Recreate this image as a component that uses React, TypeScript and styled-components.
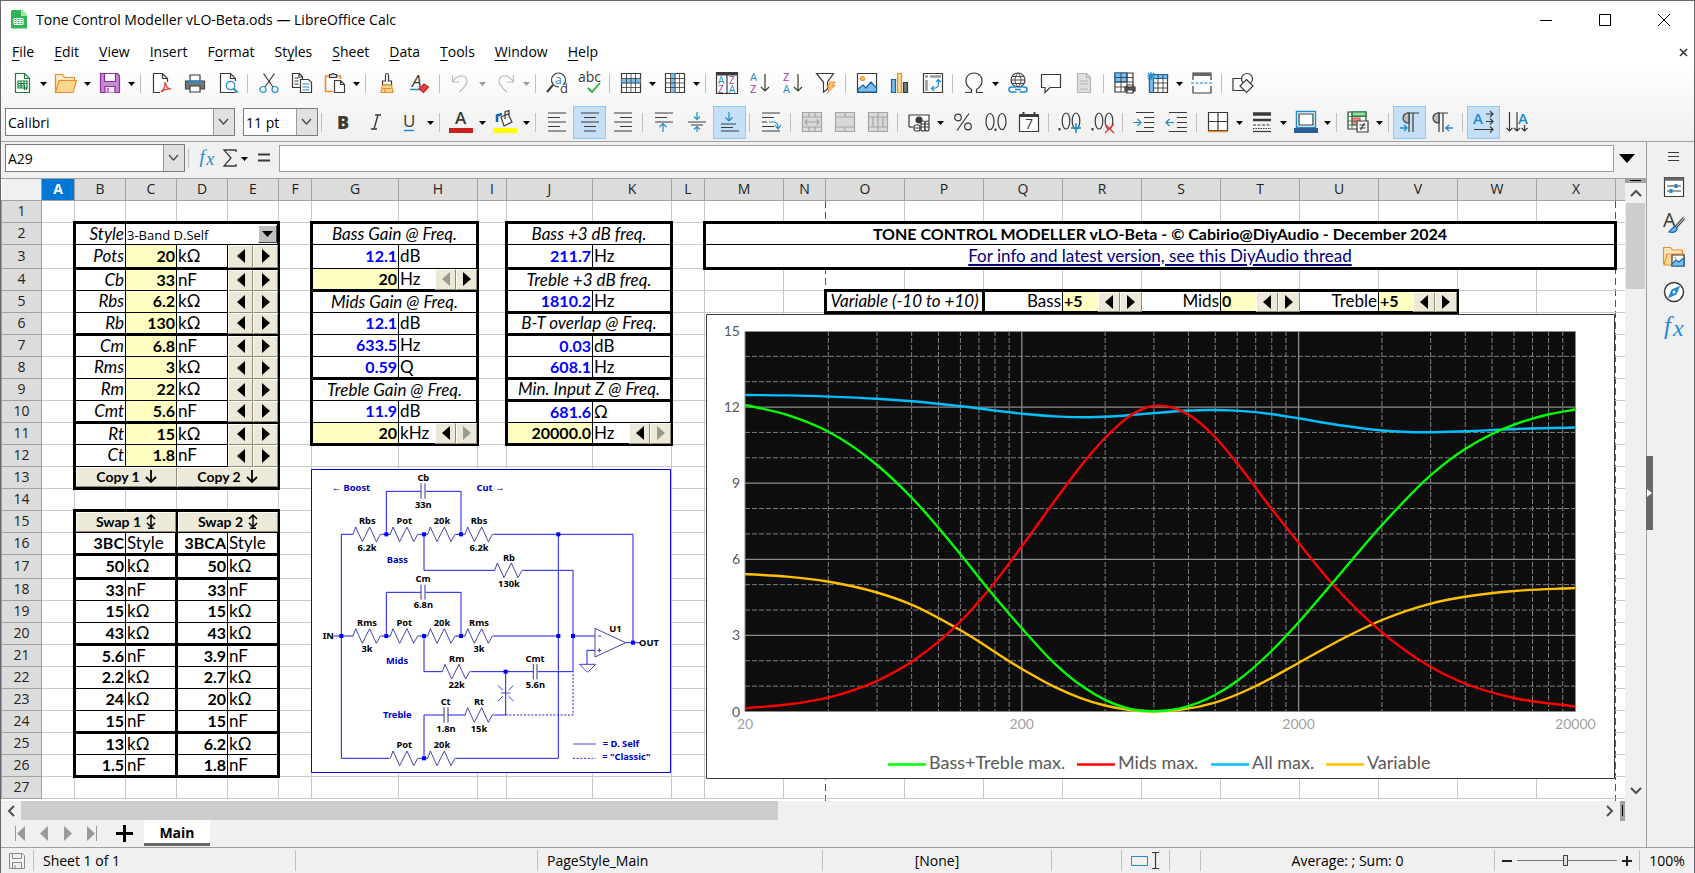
import React, { ReactNode } from "react";
import styled, { createGlobalStyle, css } from "styled-components";

const UI = `"Open Sans", "Noto Sans", sans-serif`;
const CELL = `Lato, "Open Sans", sans-serif`;
const INK = "#3a3a38";
const BLUE = "#1e8bcd";
const LINE = "#a0a0a0";

const Global = createGlobalStyle`
  *, *::before, *::after { box-sizing: border-box; }
  body { margin: 0; background: #f0f0f0; font-family: ${UI}; font-size: 14px; color: #000; }
  button, select, input { font: inherit; color: inherit; border-radius: 0; margin: 0; }
  button { padding: 0; border: 0; background: none; }
  svg { overflow: visible; }
`;

/* ---------- window frame ---------- */

const Frame = styled.div`
  min-height: 100vh;
  display: flex;
  flex-direction: column;
  border: 1px solid #68666c;
  background: #f0f0f0;
  overflow: hidden;
`;

const Top = styled.header`
  background: linear-gradient(#fff 0, #fff 60px, #f0f0f0 100%);
  border-bottom: 1px solid ${LINE};
`;

const TitleBar = styled.div`
  height: 37px;
  display: flex;
  align-items: center;
  padding: 0 1px 0 8px;
`;

const Title = styled.h1`
  margin: 0 0 0 6px;
  flex: 1;
  font-size: 14px;
  font-weight: 400;
  line-height: 20px;
`;

const WindowButton = styled.button`
  width: 59px;
  height: 36px;
  display: grid;
  place-items: center;
`;

const MenuBar = styled.nav`
  height: 28px;
  display: flex;
  align-items: center;
  padding: 0 5px 0 11px;
`;

const MenuItem = styled.button`
  font-size: 14px;
  line-height: 20px;
  margin-right: 20px;
  u { text-underline-offset: 3px; }
`;

const CloseDoc = styled.button`
  margin-left: auto;
  display: grid;
`;

const ToolRow = styled.div<{ $h: number; $pad?: number }>`
  height: ${(p) => p.$h}px;
  display: flex;
  align-items: center;
  padding: ${(p) => p.$pad ?? 0}px 0 0 4px;
`;

const Tool = styled.button<{ $on?: boolean }>`
  flex: none;
  width: 33px;
  height: 33px;
  display: grid;
  place-items: center;
  border: 1px solid ${(p) => (p.$on ? "#90c8f6" : "transparent")};
  background: ${(p) => (p.$on ? "#c5e0f6" : "none")};
`;

const DropArrow = styled.button<{ $dim?: boolean }>`
  flex: none;
  width: 11px;
  height: 33px;
  display: grid;
  place-items: center;
  padding-top: 2px;
  color: ${(p) => (p.$dim ? "#9a9a9a" : "#000")};
`;

const Sep = styled.span`
  flex: none;
  width: 1px;
  height: 19px;
  margin: 0 4px 0 3px;
  background: #c0c0c0;
`;

const Combo = styled.label<{ $w: number; $gap?: number }>`
  position: relative;
  flex: none;
  width: ${(p) => p.$w}px;
  height: 28px;
  margin-right: ${(p) => p.$gap ?? 0}px;
  display: block;
  svg { position: absolute; right: 1px; top: 1px; pointer-events: none; }
  select {
    appearance: none;
    width: 100%;
    height: 100%;
    border: 1px solid #7a7a7a;
    background: #fff;
    padding: 0 22px 0 2px;
    font-size: 14px;
  }
`;

/* ---------- body ---------- */

const Body = styled.div`
  flex: 1;
  display: flex;
  min-height: 0;
`;

const Main = styled.main`
  flex: 1;
  min-width: 0;
  display: flex;
  flex-direction: column;
`;

const FormulaBar = styled.div`
  height: 36px;
  display: flex;
  align-items: center;
  padding: 0 9px 4px 4px;
`;

const FormulaTool = styled.button<{ $w: number }>`
  flex: none;
  width: ${(p) => p.$w}px;
  height: 28px;
  display: grid;
  place-items: center;
`;

const FormulaInput = styled.input`
  flex: 1;
  min-width: 0;
  height: 27px;
  margin: 0 3px 0 1px;
  border: 1px solid ${LINE};
  background: #fff;
`;

const SheetArea = styled.div`
  flex: 1;
  display: flex;
  min-height: 0;
`;

const SheetView = styled.section`
  position: relative;
  flex: 1;
  min-width: 0;
  min-height: 623px;
  overflow: hidden;
  background: #fff;
  border-top: 1px solid ${LINE};
`;

const VBar = styled.div`
  flex: none;
  width: 21px;
  display: flex;
  flex-direction: column;
  align-items: center;
  background: #f0f0f0;
`;

const VSplit = styled.div`
  width: 100%;
  height: 5px;
  display: grid;
  place-items: center;
  background: ${LINE};
  &::after { content: ""; width: 11px; height: 1px; background: #000; }
`;

const VThumb = styled.div`
  width: 19px;
  height: 86px;
  background: #cdcdcd;
  margin-bottom: auto;
`;

const ScrollButton = styled.button`
  flex: none;
  width: 20px;
  height: 20px;
  display: grid;
  place-items: center;
`;

const HBar = styled.div`
  height: 19px;
  display: flex;
  align-items: center;
  margin-right: 21px;
`;

const HThumb = styled.div`
  width: 46.6%;
  height: 19px;
  background: #cdcdcd;
  margin-right: auto;
`;

const HSplit = styled.div`
  width: 5px;
  height: 20px;
  display: grid;
  place-items: center;
  background: ${LINE};
  &::after { content: ""; width: 1px; height: 11px; background: #000; }
`;

const Tabs = styled.div`
  height: 27px;
  display: flex;
  padding-left: 7px;
`;

const TabNav = styled.button<{ $w?: number }>`
  width: ${(p) => p.$w ?? 24}px;
  height: 26px;
  padding-top: 1px;
  display: grid;
  place-items: center;
`;

const SheetTab = styled.button`
  width: 66px;
  height: 26px;
  padding-top: 3px;
  background: #fff;
  border-bottom: 3px solid #696969;
  font-weight: 700;
  font-size: 14px;
  line-height: 20px;
`;

const Sidebar = styled.aside`
  position: relative;
  flex: none;
  width: 48px;
  border-left: 1px solid ${LINE};
  padding: 1px 0 0 9px;
  display: flex;
  flex-direction: column;
`;

const SideTool = styled.button<{ $h?: number }>`
  width: 35px;
  height: ${(p) => p.$h ?? 35}px;
  display: grid;
  place-items: center;
`;

const SideHandle = styled.button`
  position: absolute;
  left: -1px;
  top: 314px;
  width: 7px;
  height: 74px;
  background: #696969;
  display: grid;
  place-items: center;
`;

/* ---------- status bar ---------- */

const Status = styled.footer`
  height: 26px;
  display: grid;
  grid-template-columns: 32px 262fr 242fr 285fr 229fr 70fr 47fr 31fr 294fr 145px 55px;
  align-items: center;
  border-top: 1px solid ${LINE};
`;

const StatusCell = styled.div<{ $align?: string }>`
  height: 21px;
  display: flex;
  align-items: center;
  justify-content: ${(p) => p.$align ?? "center"};
  gap: 5px;
  padding: 0 9px;
  font-size: 14px;
  line-height: 20px;
  white-space: nowrap;
  & + & { border-left: 1px solid #c0c0c0; }
`;

const ZoomRange = styled.input`
  appearance: none;
  flex: none;
  width: 100px;
  height: 12px;
  background: linear-gradient(#777, #777) center / 100% 1px no-repeat;
  &::-webkit-slider-thumb {
    appearance: none;
    width: 5px;
    height: 11px;
    border: 1px solid #444;
    background: #ddd;
  }
`;

/* ---------- sheet ---------- */

type Edge = "grid" | "thin" | "thick" | "head" | "none";
const edgeCss: Record<Edge, string> = {
  grid: "1px solid #c8c8c8",
  thin: "1px solid #000",
  thick: "3px solid #000",
  head: "1px solid #a0a0a0",
  none: "0 none",
};

const Grid = styled.table`
  position: relative;
  border-collapse: collapse;
  table-layout: fixed;
  width: 0;
  font-family: ${CELL};
  font-size: 17px;
  line-height: 18px;
`;

const Col = styled.col<{ $w: number }>`
  width: ${(p) => p.$w}px;
`;

const Row = styled.tr<{ $h: number }>`
  height: ${(p) => p.$h}px;
`;

const Head = styled.th<{ $on?: boolean; $corner?: boolean }>`
  padding: 0;
  font-family: ${UI};
  font-size: 14px;
  font-weight: ${(p) => (p.$on ? 700 : 400)};
  color: ${(p) => (p.$on ? "#fff" : "#222")};
  background: ${(p) => (p.$on ? "#0078d7" : p.$corner ? "#f0f0f0" : "#dcdcdc")};
  border: ${edgeCss.head};
  border-top: 0;
  ${(p) => p.$corner && css`border-left: 0;`}
`;

const Cell = styled.td<{ $e: Edge[]; $fill?: boolean; $wide?: boolean; $align?: string; $k?: string }>`
  position: relative;
  padding: 0 1px;
  white-space: nowrap;
  border-top: ${(p) => edgeCss[p.$e[0]]};
  border-right: ${(p) => edgeCss[p.$e[1]]};
  border-bottom: ${(p) => edgeCss[p.$e[2]]};
  border-left: ${(p) => edgeCss[p.$e[3]]};
  background: ${(p) => (p.$fill ? "#ffffc4" : p.$wide ? "#fff" : "transparent")};
  text-align: ${(p) => p.$align ?? "left"};
  ${(p) => p.$k === "label" && css`font-style: italic;`}
  ${(p) => (p.$k === "value" || p.$k === "result") && css`font-weight: 700; font-size: 16px;`}
  ${(p) => p.$k === "result" && css`color: #0000ff;`}
`;

/* dashed line at the edge of a printed page */
const PageBreak = styled.div<{ $x: number }>`
  position: absolute;
  left: ${(p) => p.$x}px;
  top: 22px;
  bottom: 0;
  width: 1px;
  background: repeating-linear-gradient(#555 0 7px, #fff 7px 11px);
`;

const SheetLink = styled.a`
  color: #000080;
  text-underline-offset: 2px;
  text-decoration-thickness: 2px;
`;

const SpinBox = styled.div<{ $w: number }>`
  position: absolute;
  z-index: 1;
  right: -1px;
  top: 0;
  bottom: -1px;
  width: ${(p) => p.$w}px;
  display: flex;
`;

const face = css`
  background: #ece9d8;
  border: 1px solid;
  border-color: #fffef6 #8f8b78 #8f8b78 #fffef6;
`;

const SpinButton = styled.button`
  ${face}
  flex: 1;
  display: grid;
  place-items: center;
  color: #000;
  &:disabled { color: #9d9a8c; }
`;

const SheetButton = styled.button`
  ${face}
  position: absolute;
  z-index: 1;
  inset: 0 -1px 0 0;
  display: flex;
  align-items: center;
  justify-content: center;
  gap: 5px;
  font-size: 14px;
  font-weight: 700;
`;

const StyleSelect = styled.label`
  position: absolute;
  inset: 0;
  select {
    appearance: none;
    width: 100%;
    height: 100%;
    border: 0;
    background: #fff;
    padding: 2px 0 0 1px;
    font-family: ${UI};
    font-size: 13px;
    line-height: 16px;
  }
  svg { position: absolute; right: 0; top: 1px; background: #c0c0c0; border: 1px solid; border-color: #fff #444 #444 #fff; pointer-events: none; }
`;

const Floating = styled.figure<{ $x: number; $y: number }>`
  position: absolute;
  z-index: 2;
  left: ${(p) => p.$x}px;
  top: ${(p) => p.$y}px;
  margin: 0;
  svg { display: block; }
`;

/* ---------- icons ---------- */

const Ico = ({ children, s = 20, vb = 20 }: { children: ReactNode; s?: number; vb?: number }) => (
  <svg width={s} height={s} viewBox={`0 0 ${vb} ${vb}`} fill="none" stroke={INK} strokeWidth="1.2" aria-hidden="true">
    {children}
  </svg>
);
const glyph = (t: string, x: number, y: number, size: number, fill = INK, weight = 400, extra: object = {}) => (
  <text x={x} y={y} fontSize={size} fill={fill} stroke="none" fontWeight={weight} fontFamily="Open Sans, sans-serif" {...extra}>{t}</text>
);
const Caret = () => (
  <svg width="7" height="4" viewBox="0 0 7 4" aria-hidden="true"><path d="M0 0h7L3.500 4z" fill="currentColor" /></svg>
);
const ComboArrow = () => (
  <svg width="21" height="26" viewBox="0 0 21 26" aria-hidden="true">
    <path d="M0 0h21v26H0z" fill="#e1e1e1" /><path d="M.5 0v26" stroke="#9a9a9a" /><path d="M6 10l4.500 5 4.500-5" fill="none" stroke="#444" strokeWidth="1.200" />
  </svg>
);
const Tri = ({ left }: { left?: boolean }) => (
  <svg width="8" height="14" viewBox="0 0 8 14" aria-hidden="true"><path d={left ? "M8 0v14L0 7z" : "M0 0v14l8-7z"} fill="currentColor" /></svg>
);
const gridLines = "M.5 5.500h19M.5 10h19M.5 14.500h19M5.500.5v19M10 .5v19M14.500.5v19";

const icons: Record<string, ReactNode> = {
  new: <Ico><path d="M3.500.5h9l5 5v14h-14z" fill="#fff" stroke="#18803a" /><path d="M12.500.5v5h5" stroke="#18803a" /><path d="M6 8h9v7H6zM6 10.500h9M6 13h6M9 8v7M12 8v4" stroke="#18803a" /><path d="M12.500 12v5M14.500 14v3" stroke="#18803a" /></Ico>,
  open: <Ico s={23} vb={23}><path d="M1.500 20V2.500h7l2 3h10V9" fill="#fde8c0" stroke="#ef8b2c" /><path d="M1.500 20.500L5 8.500h17.500L19 20.500z" fill="#fbd88f" stroke="#ef8b2c" /></Ico>,
  save: <Ico><path d="M.5.5h17l2 2v17H.5z" fill="#c58ad0" stroke="#8e2f9e" /><path d="M4.500.5h11v8h-11z" fill="#fff" stroke="#8e2f9e" /><path d="M5 19.500v-6h10v6M8 15v4" fill="#f3e4f6" stroke="#8e2f9e" /></Ico>,
  pdf: <Ico><path d="M8 19.500H1.500V.5h9l5 5V9M10.500.5v5h5" fill="#fff" /><path d="M9 19c3-3 4.500-6 4-8.500-.5-1.500 1-1 .8.800 0 2.500 2.700 4.700 5.200 4.700-3-.5-7 .5-10 3" stroke="#e04646" strokeWidth="1.400" /></Ico>,
  print: <Ico><path d="M5 8V2h10v6" fill="#fff" /><path d="M.5 8h19v8H.5z" fill="#777" stroke="#4a4a48" /><path d="M3 8.500h14" stroke={BLUE} strokeWidth="2" /><path d="M5 13h10v6H5z" fill="#fff" /></Ico>,
  preview: <Ico><path d="M17.500 19.500h-15V.5h10l5 5V8M12.500.5v5h5" fill="#fff" /><circle cx="12.500" cy="12.500" r="4.200" stroke={BLUE} fill="#fff" /><path d="M15.500 15.500l4 4" stroke={BLUE} strokeWidth="2" /></Ico>,
  cut: <Ico><path d="M4.500.5L14 14M15.500.5L6 14" /><circle cx="4" cy="16.500" r="3" stroke={BLUE} /><circle cx="16" cy="16.500" r="3" stroke={BLUE} /></Ico>,
  copy: <Ico><path d="M8 14.500H.5V.5h7l3 3V6M7 .5v3.500h3.500M2.500 5h4M2.500 8h4M2.500 11h4" /><path d="M8.500 6.500h8l3 3v10h-11z" fill="#fff" /><path d="M10.500 11h7M10.500 14h7M10.500 17h7" stroke={BLUE} /></Ico>,
  paste: <Ico><path d="M8 18.500H.5V3H5M11 3h4.500v3" stroke="#ef8b2c" strokeWidth="1.600" /><path d="M4.500 4.500v-3h2l1.500-1 1.500 1h2v3z" fill="#ddd" /><path d="M9.500 7.500h6l4 4v8h-10zM15.500 7.500v4h4" fill="#fff" /></Ico>,
  brush: <Ico><path d="M10 .5c1 0 1.500.7 1.500 1.500V8h3v4h-9V8h3V2c0-.8.5-1.500 1.500-1.500z" fill="#fff" /><path d="M5.500 12h9l1.500 7.500H4z" fill="#fbd88f" stroke="#ef8b2c" /><path d="M5 15.500h9M8 16v3" stroke="#ef8b2c" /></Ico>,
  clear: <Ico>{glyph("A", 2, 14, 17, INK, 400, { fontStyle: "italic" })}<path d="M0 16.500h10" stroke={BLUE} strokeWidth="1.500" /><path d="M9 16l5-5 4.500 3-5 5.500z" fill="#e04646" stroke="#c9211e" /></Ico>,
  undo: <Ico><path d="M1.500 2v7h7M1.500 9C6 1 16 1 16 8.500c0 4-4 7-8 10.500" stroke="#bdbdbd" /></Ico>,
  redo: <Ico><path d="M18.500 2v7h-7M18.500 9C14 1 4 1 4 8.500c0 4 4 7 8 10.500" stroke="#bdbdbd" /></Ico>,
  find: <Ico s={22} vb={22}><circle cx="12.500" cy="8" r="7" /><path d="M7 13l-6 7" strokeWidth="2" />{glyph("a", 9, 12, 12, BLUE)}<path d="M13 13h8v8h-8z" fill="#fbfbfb" stroke="none" />{glyph("d", 14, 21, 13, INK)}</Ico>,
  abc: <Ico s={24} vb={24}>{glyph("abc", 0, 11, 14)}<path d="M10 17l4 4 8-9" stroke="#2ba84a" strokeWidth="1.800" /></Ico>,
  row: <Ico><path d="M.5.5h19v19H.5z" fill="#fff" /><path d="M.5 5.500h19v5H.5z" fill="#7cbcec" stroke="none" /><path d={gridLines} strokeWidth=".8" /></Ico>,
  col: <Ico><path d="M.5.5h19v19H.5z" fill="#fff" /><path d="M5.500.5h5v19h-5z" fill="#7cbcec" stroke="none" /><path d={gridLines} strokeWidth=".8" /></Ico>,
  sort: <Ico s={22} vb={22}><path d="M.5.5h21v21H.5zM11 3v18" fill="#fff" /><path d="M.5 2h21" strokeWidth="3" />{glyph("A", 2, 12, 10, BLUE)}{glyph("Z", 13, 12, 10, "#a63da8")}{glyph("Z", 2, 21, 10, "#a63da8")}{glyph("A", 13, 21, 10, BLUE)}</Ico>,
  az: <Ico s={22} vb={22}>{glyph("A", 1, 9, 11, BLUE)}{glyph("Z", 1, 21, 11, "#a63da8")}<path d="M16 2v17M12 15l4 4 4-4" /></Ico>,
  za: <Ico s={22} vb={22}>{glyph("Z", 1, 9, 11, "#a63da8")}{glyph("A", 1, 21, 11, BLUE)}<path d="M16 2v17M12 15l4 4 4-4" /></Ico>,
  filter: <Ico><path d="M.5.5h17l-6 8.500V16l-4 3V9z" fill="#fff" /><path d="M14 9h5l-2.500 3.500H19L11.500 20l2-5.500H11z" fill="#f9c46b" stroke="#ef7b1c" strokeWidth=".8" /></Ico>,
  image: <Ico><path d="M.5.5h19v19H.5z" fill="#fff" /><circle cx="5.500" cy="5.500" r="2" fill="#fbc46b" stroke="#ef8b2c" /><path d="M1 16l5-4 3 3 5-6 5.500 6v4H1z" fill="#7cbcec" stroke="#1566a8" /></Ico>,
  chart: <Ico><path d="M1.500 6.500h4v13h-4z" fill="#7cbcec" stroke="#1566a8" /><path d="M7.500.5h4v19h-4z" fill="#fbd88f" stroke="#ef8b2c" /><path d="M13.500 9.500h4v10h-4z" fill="#777" /></Ico>,
  pivot: <Ico><path d="M.5.5h19v19H.5z" fill="#fff" /><path d="M2 3.500h3M7 3.500h11M3.500 7v11" strokeWidth="2.500" stroke="#999" /><path d="M15.500 7v4c0 3-3 4.500-7 4.500M13 9l2.500-2.500L18 9M11 13l-2.500 2.500L11 18" stroke={BLUE} /></Ico>,
  omega: <Ico s={22} vb={22}><path d="M2 20.500h6.500v-3C4.500 15 3 12 3 9c0-5 3.500-8 8-8s8 3 8 8c0 3-1.500 6-5.500 8.500v3H20" /></Ico>,
  link: <Ico s={22} vb={22}><circle cx="11" cy="8" r="7" /><path d="M4 8h14M5 4.500h12M5 11.500h12M11 1c-4 4-4 10 0 14M11 1c4 4 4 10 0 14" strokeWidth=".9" /><path d="M9.500 15h-5a2.500 2.500 0 000 5h5M12.500 15h5a2.500 2.500 0 010 5h-5M8 17.500h6" stroke={BLUE} strokeWidth="1.500" /></Ico>,
  comment: <Ico><path d="M.5 1.500h19v13H9l-5 5v-5H.5z" fill="#fff" /></Ico>,
  page: <Ico><path d="M3.500.5h9l4 4v15h-13z" fill="#dedede" stroke="#b4b4b4" /><path d="M12.500.5v4h4M6 8h8M6 11h8M6 16h8" stroke="#b4b4b4" /></Ico>,
  area: <Ico s={22} vb={22}><path d="M1 1h18v19H1z" fill="#fff" /><path d="M1 1h12v9H1z" fill="#7cbcec" stroke="#1566a8" /><path d="M1 5.500h18M1 10h18M1 15h18M7 1v19M13 1v19" strokeWidth=".9" /><path d="M11 15h10v4H11z" fill="#555" /><path d="M13 13h6v2h-6zM13 18h6v3h-6z" fill="#fff" /></Ico>,
  freeze: <Ico s={22} vb={22}><path d="M2.500 2.500h18v18h-18z" fill="#fff" /><path d="M2.500 2.500h18v4h-14v14h-4z" fill="#7cbcec" stroke="#1566a8" /><path d="M7 11h13M7 16h13M11 3v17M16 3v17" strokeWidth=".9" /><path d="M4 0v8M0 4h8M1 1l6 6M7 1L1 7" stroke={BLUE} /></Ico>,
  split: <Ico s={22} vb={22}><path d="M2 8V1h18v7M2 14v7h18v-7" fill="#fff" /><path d="M2 2.500h18" strokeWidth="3" stroke="#666" /><path d="M0 11h22" stroke={BLUE} strokeDasharray="3 1.500" /></Ico>,
  shapes: <Ico s={22} vb={22}><path d="M1 6.500h11v12H1z" fill="#fff" /><circle cx="15" cy="7" r="5.500" fill="#fff" /><path d="M14.500 7.500l6.500 6.500-6.500 6.500L8 14z" fill="#fff" /></Ico>,
  bold: <Ico>{glyph("B", 4, 17, 18, INK, 800)}</Ico>,
  italic: <Ico><path d="M9 3h6M5 17h6M12 3L8 17" strokeWidth="1.400" /></Ico>,
  under: <Ico>{glyph("U", 4, 15, 17)}<path d="M5 18.500h10" stroke={BLUE} strokeWidth="1.500" /></Ico>,
  color: <Ico s={24} vb={24}>{glyph("A", 6, 14, 17, INK, 600)}<path d="M0 18h24v5H0z" fill="#c9211e" stroke="none" /></Ico>,
  fill: <Ico s={24} vb={24}><path d="M8 7l7-3 4 8-8 4z" fill="#fff" /><path d="M12 9V2l4-1.500v5" /><path d="M4 12V5.500l5-1.500" stroke="#1566a8" strokeWidth="2.500" /><path d="M0 18h24v5H0z" fill="#ff0" stroke="none" /></Ico>,
  left: <Ico><path d="M1 1h18M1 5.500h12M1 10h18M1 14.500h12M1 19h18" /></Ico>,
  center: <Ico><path d="M1 1h18M4 5.500h12M1 10h18M4 14.500h12M4 19h12" /></Ico>,
  right: <Ico><path d="M1 1h18M7 5.500h12M1 10h18M7 14.500h12M1 19h18" /></Ico>,
  vtop: <Ico><path d="M1 1h18M1 5.500h12M1 10h18" /><path d="M9 20v-8M5.500 15L9 11.500l3.500 3.500" stroke={BLUE} /></Ico>,
  vmid: <Ico><path d="M1 10h18M4 13h12" strokeWidth="1.100" /><path d="M10 0v7M7 4.500L10 7.500l3-3M10 20v-5M7 17.500l3-3 3 3" stroke={BLUE} /></Ico>,
  vbot: <Ico><path d="M1 19h18M1 15.500h12M1 12h15" /><path d="M9 0v9M5.500 5.500L9 9l3.500-3.500" stroke={BLUE} /></Ico>,
  wrap: <Ico><path d="M1 1h18M1 5.500h12M1 10h5M1 14.500h12M1 19h18" /><path d="M8 10h5c3 0 4 2 4 6M14 13l3 4 3-4" stroke={BLUE} /></Ico>,
  merge: <Ico><path d="M.5.5h19v19H.5zM.5 5h19M.5 15h19M7 .5V5M13 .5V5M7 15v4.500M13 15v4.500" fill="#d8d8d8" stroke="#a5a5a5" /><path d="M3 10h14M5.500 7.500L3 10l2.500 2.500M14.500 7.500L17 10l-2.500 2.500" stroke="#a5a5a5" /></Ico>,
  merge2: <Ico><path d="M.5.5h19v19H.5zM.5 5h19M.5 15h19M10 .5V5M10 15v4.500" fill="#d8d8d8" stroke="#a5a5a5" /></Ico>,
  merge3: <Ico><path d="M.5.5h19v19H.5zM.5 5h19M.5 15h19M10 .5V5M10 15v4.500M5 5v10M10 5v10M15 5v10" fill="#d8d8d8" stroke="#a5a5a5" /></Ico>,
  money: <Ico s={22} vb={22}><path d="M1 16V4h20v6" fill="#fff" /><circle cx="11" cy="9" r="3" fill={INK} /><path d="M1 16h4" /><rect x="6" y="14" width="6" height="6" rx="2" fill="#fff" /><rect x="13" y="10" width="4" height="10" rx="2" fill="#fff" /><rect x="17" y="10" width="4" height="10" rx="2" fill="#fff" /><path d="M6 17h6M13 13h8M13 16h8" /></Ico>,
  percent: <Ico><circle cx="5" cy="5.500" r="3.300" /><circle cx="15" cy="14.500" r="3.300" /><path d="M16 1.500L4 18.500" /></Ico>,
  number: <Ico s={24} vb={24}><ellipse cx="6" cy="11.500" rx="4" ry="8" /><ellipse cx="18" cy="11.500" rx="4" ry="8" /><path d="M11.500 18.500v2.500" strokeWidth="2" /></Ico>,
  date: <Ico><path d="M.5 3h19v16.500H.5z" fill="#fff" /><path d="M.5 3.500h19" strokeWidth="3" /><path d="M4.500 0v3M15.500 0v3" strokeWidth="2" />{glyph("7", 6, 17, 14)}</Ico>,
  addDec: <Ico s={24} vb={24}><path d="M1.500 18v2.500" strokeWidth="2" /><ellipse cx="8" cy="11" rx="3.800" ry="8" /><ellipse cx="18" cy="11" rx="3.800" ry="8" /><path d="M18 13v10M13 18h10" stroke={BLUE} strokeWidth="1.500" /></Ico>,
  delDec: <Ico s={24} vb={24}><path d="M1.500 18v2.500" strokeWidth="2" /><ellipse cx="8" cy="11" rx="3.800" ry="8" /><ellipse cx="18" cy="11" rx="3.800" ry="8" /><path d="M14 14l9 9M23 14l-9 9" stroke="#e04646" strokeWidth="1.500" /></Ico>,
  indent: <Ico s={22} vb={22}><path d="M3 1.500h18M11 6.500h10M11 11.500h10M11 16.500h10M3 20.500h18" /><path d="M0 11.500h8M4.500 8L8 11.500 4.500 15" stroke={BLUE} /></Ico>,
  outdent: <Ico s={22} vb={22}><path d="M3 1.500h18M11 6.500h10M11 11.500h10M11 16.500h10M3 20.500h18" /><path d="M0 11.500h8M3.500 8L0 11.500 3.500 15" stroke={BLUE} /></Ico>,
  borders: <Ico><path d="M.5.5h19v18H.5zM.5 9.500h19M10 .5v19" fill="#fff" /><path d="M0 19.500h20" stroke="#ef8b2c" strokeWidth="1.500" /></Ico>,
  lines: <Ico><path d="M1 2h18" strokeWidth="3.500" /><path d="M1 8h18" strokeWidth="2.500" /><path d="M1 13h18" strokeDasharray="3 1.500" /><path d="M1 16.500h18" strokeDasharray="1.500 1" /><path d="M1 19.500h18" /></Ico>,
  bcolor: <Ico s={24} vb={24}><path d="M2.500 1.500h19v16h-19z" fill="#fff" stroke={BLUE} strokeWidth="1.500" /><path d="M5 4h14v11H5z" /><path d="M0 18h24v5H0z" fill="#2a6099" stroke="none" /></Ico>,
  cond: <Ico s={22} vb={22}><path d="M1 1h18v17H1z" fill="#fff" /><path d="M5 1h14v4H5z" fill="#9fd8a4" stroke="#18803a" /><path d="M5 7h8v7H5z" fill="#f58a8a" stroke="#e04646" /><path d="M1 5.500h18M1 10h8M1 14h8M5 1v17" stroke="#18803a" strokeWidth=".9" /><path d="M10 10h11v11H10z" fill="#fff" /><path d="M12.500 14h6M12.500 17h6M17.500 12l-4 7" /></Ico>,
  ltr: <Ico><path d="M9 20V1M13 20V1M7 1h12" /><path d="M9 1H8a4.500 4.500 0 000 10h1z" fill="#bbb" /><path d="M0 16h7M4 13l3 3-3 3" stroke={BLUE} strokeWidth="1.400" /></Ico>,
  rtl: <Ico><path d="M6 20V1M10 20V1M4 1h11" /><path d="M6 1H5a4.500 4.500 0 000 10h1z" fill="#bbb" /><path d="M12 16h8M16 13l-3 3 3 3" stroke={BLUE} strokeWidth="1.400" /></Ico>,
  tdir: <Ico s={22} vb={22}>{glyph("A", 0, 13, 15, BLUE, 600)}<path d="M13 3h7M17 0l3 3-3 3M13 10.500h7M17 7.500l3 3-3 3M1 18.500h19M17 15.500l3 3-3 3" strokeWidth="1.200" /></Ico>,
  tdown: <Ico s={22} vb={22}>{glyph("A", 12, 13, 15, BLUE, 600)}<path d="M3.500 1v19M.5 17l3 3 3-3M11 1v19M8 17l3 3 3-3M18.500 14v6M15.500 17l3 3 3-3" strokeWidth="1.200" /></Ico>,
  props: <Ico s={22} vb={22}><path d="M1.500 1.500h19v19h-19z" fill="#fff" /><path d="M1.500 3h19" strokeWidth="3.500" stroke="#666" /><path d="M4 10h14M4 15h14" /><path d="M13 8v4M8 13v4" stroke={BLUE} strokeWidth="3" /></Ico>,
  styles: <Ico s={22} vb={22}>{glyph("A", 0, 16, 20, INK)}<path d="M21 7L13 16" strokeWidth="3" /><path d="M21 7L13 16" strokeWidth="1" stroke="#fff" /><path d="M13 16c-3-1-4 2-7 5 4 1 8 0 8-4z" fill="#7cbcec" stroke="#1566a8" /></Ico>,
  gallery: <Ico s={22} vb={22}><path d="M.5 18V1.500h7l2 2.500h10v4" fill="#fde8c0" stroke="#ef8b2c" /><path d="M1 19L4 8h17v11z" fill="#fbd88f" stroke="#ef8b2c" /><path d="M9 9h12v11H9z" fill="#fff" /><path d="M9 18l4-4 3 2 5-4v8H9z" fill="#7cbcec" stroke="#1566a8" /><circle cx="12.500" cy="12" r="1" fill="#ef8b2c" stroke="none" /></Ico>,
  compass: <Ico s={22} vb={22}><circle cx="11" cy="11" r="9.500" fill="#fff" strokeWidth="1.500" /><path d="M16 6l-3 7-7 3 3-7z" fill={BLUE} stroke={BLUE} /><circle cx="11" cy="11" r="1.500" fill="#fff" stroke="none" /></Ico>,
};

const fxText = (size: number) => (
  <svg width={size} height={size} viewBox="0 0 24 24" aria-hidden="true">
    <text x="2" y="19" fontFamily="Liberation Serif, serif" fontStyle="italic" fontSize="25" fill={BLUE}>f</text>
    <text x="11" y="21" fontFamily="Liberation Serif, serif" fontStyle="italic" fontSize="24" fill={BLUE}>x</text>
  </svg>
);

/* "name" is a button, "name+" has a drop-down arrow, "name!" is switched on, "|" is a separator */
const bar1 = "new+ open+ save+ | pdf print preview | cut copy paste+ | brush clear | undo+ redo+ | find abc | row+ col+ | sort az za filter | image chart pivot | omega+ link comment page | area freeze+ split | shapes".split(" ");
const bar2 = "| bold italic under+ | color+ fill+ | left center! right | vtop vmid vbot! | wrap | merge merge2 merge3 | money+ percent number date | addDec delDec | indent outdent | borders+ lines+ bcolor+ | cond+ | ltr! rtl | tdir! tdown".split(" ");

const Tools = ({ items }: { items: string[] }) => (
  <>
    {items.map((it, i) => {
      if (it === "|") return <Sep key={i} />;
      const name = it.replace(/[+!]/, "");
      return (
        <React.Fragment key={i}>
          <Tool type="button" aria-label={name} $on={it.endsWith("!")}>{icons[name]}</Tool>
          {it.endsWith("+") && (
            <DropArrow type="button" aria-label={`${name} options`} $dim={name === "undo" || name === "redo"}><Caret /></DropArrow>
          )}
        </React.Fragment>
      );
    })}
  </>
);

/* ---------- sheet model ---------- */

const cols = "ABCDEFGHIJKLMNOPQRSTUVWX".split("");
const widths = [33, 51, 51, 51, 51, 33, 87, 79, 29, 86, 79, 33, 79, 42, 79, 79, 79, 79, 79, 79, 79, 79, 79, 79, 12];
const NR = 27;
const NC = widths.length;
const rowHeight = (r: number) => (r === 3 || r === 17 ? 24 : 22);

type Content = { v?: ReactNode; k?: string; align?: string; fill?: boolean; span?: number };
const cells: Record<string, Content> = {};
const H: Edge[][] = Array.from({ length: NR + 2 }, () => Array(NC + 1).fill("grid"));
const V: Edge[][] = Array.from({ length: NR + 2 }, () => Array(NC + 2).fill("grid"));
const ci = (c: string) => cols.indexOf(c);

/* H[r][c] is the edge under row r, V[r][c] the edge left of column c */
const hline = (r: number, c1: string, c2: string, e: Edge) => { for (let c = ci(c1); c <= ci(c2); c++) H[r][c] = e; };
const vline = (c: number, r1: number, r2: number, e: Edge) => { for (let r = r1; r <= r2; r++) V[r][c] = e; };
const box = (c1: string, r1: number, c2: string, r2: number) => {
  for (let r = r1; r < r2; r++) hline(r, c1, c2, "thin");
  for (let c = ci(c1) + 1; c <= ci(c2); c++) vline(c, r1, r2, "thin");
  hline(r1 - 1, c1, c2, "thick");
  hline(r2, c1, c2, "thick");
  vline(ci(c1), r1, r2, "thick");
  vline(ci(c2) + 1, r1, r2, "thick");
};

for (let r = 1; r <= NR; r++) { V[r][0] = "head"; V[r][14] = "none"; V[r][24] = "none"; }
for (let c = 0; c < NC; c++) H[0][c] = "head";

box("B", 2, "E", 13);
[3, 6, 10].forEach((r) => hline(r, "B", "E", "thick"));
box("B", 15, "E", 26);
[16, 17, 20, 24].forEach((r) => hline(r, "B", "E", "thick"));
vline(ci("D"), 15, 26, "thick");
box("G", 2, "H", 11);
[4, 8].forEach((r) => hline(r, "G", "H", "thick"));
box("J", 2, "K", 11);
[3, 5, 6, 8, 9].forEach((r) => hline(r, "J", "K", "thick"));
box("M", 2, "X", 3);
box("O", 5, "V", 5);
vline(ci("Q"), 5, 5, "thick");

const Spin = ({ w, name, off }: { w: number; name: string; off?: "left" | "right" }) => (
  <SpinBox $w={w}>
    <SpinButton type="button" aria-label={`${name} down`} disabled={off === "left"}><Tri left /></SpinButton>
    <SpinButton type="button" aria-label={`${name} up`} disabled={off === "right"}><Tri /></SpinButton>
  </SpinBox>
);

cells.B2 = { v: "Style", k: "label", align: "right" };
cells.C2 = {
  span: 3,
  v: (
    <StyleSelect>
      <select aria-label="Style" defaultValue="3-Band D.Self"><option>3-Band D.Self</option></select>
      <svg width="19" height="18" viewBox="0 0 17 16" aria-hidden="true"><path d="M3 5h11l-5.500 6z" fill="#000" /></svg>
    </StyleSelect>
  ),
};
["Pots 20 kΩ", "Cb 33 nF", "Rbs 6.2 kΩ", "Rb 130 kΩ", "Cm 6.8 nF", "Rms 3 kΩ", "Rm 22 kΩ", "Cmt 5.6 nF", "Rt 15 kΩ", "Ct 1.8 nF"].forEach((s, i) => {
  const [name, value, unit] = s.split(" ");
  const r = i + 3;
  cells["B" + r] = { v: name, k: "label", align: "right" };
  cells["C" + r] = { v: value, k: "value", align: "right", fill: true };
  cells["D" + r] = { v: unit };
  cells["E" + r] = { v: <Spin w={50} name={name} /> };
});

const DownArrow = () => <svg width="12" height="13" viewBox="0 0 12 13" aria-hidden="true"><path d="M6 0v12M1 7l5 5 5-5" fill="none" stroke="#000" strokeWidth="1.800" /></svg>;
const SwapArrow = () => <svg width="10" height="15" viewBox="0 0 10 15" aria-hidden="true"><path d="M5 1v12M1 5l4-4 4 4M1 9l4 4 4-4M2 14.300h6" fill="none" stroke="#000" strokeWidth="1.500" /></svg>;
cells.B13 = { span: 2, v: <SheetButton type="button">Copy 1 <DownArrow /></SheetButton> };
cells.D13 = { span: 2, v: <SheetButton type="button">Copy 2 <DownArrow /></SheetButton> };
cells.B15 = { span: 2, v: <SheetButton type="button">Swap 1 <SwapArrow /></SheetButton> };
cells.D15 = { span: 2, v: <SheetButton type="button">Swap 2 <SwapArrow /></SheetButton> };
[
  "3BC Style 3BCA", "50 kΩ 50", "33 nF 33", "15 kΩ 15", "43 kΩ 43", "5.6 nF 3.9", "2.2 kΩ 2.7", "24 kΩ 20", "15 nF 15", "13 kΩ 6.2", "1.5 nF 1.8",
].forEach((s, i) => {
  const [a, unit, b] = s.split(" ");
  const r = i + 16;
  cells["B" + r] = { v: a, k: "value", align: "right" };
  cells["C" + r] = { v: unit };
  cells["D" + r] = { v: b, k: "value", align: "right" };
  cells["E" + r] = { v: unit };
});

const heading = (ref: string, v: string) => { cells[ref] = { v, k: "label", align: "center", span: 2 }; };
const result = (c1: string, c2: string, r: number, v: string, unit: string) => {
  cells[c1 + r] = { v, k: "result", align: "right" };
  cells[c2 + r] = { v: unit };
};
heading("G2", "Bass Gain @ Freq.");
result("G", "H", 3, "12.1", "dB");
cells.G4 = { v: "20", k: "value", align: "right", fill: true };
cells.H4 = { v: <>Hz<Spin w={42} name="Bass frequency" off="left" /></> };
heading("G5", "Mids Gain @ Freq.");
result("G", "H", 6, "12.1", "dB");
result("G", "H", 7, "633.5", "Hz");
result("G", "H", 8, "0.59", "Q");
heading("G9", "Treble Gain @ Freq.");
result("G", "H", 10, "11.9", "dB");
cells.G11 = { v: "20", k: "value", align: "right", fill: true };
cells.H11 = { v: <>kHz<Spin w={42} name="Treble frequency" off="right" /></> };
heading("J2", "Bass +3 dB freq.");
result("J", "K", 3, "211.7", "Hz");
heading("J4", "Treble +3 dB freq.");
result("J", "K", 5, "1810.2", "Hz");
heading("J6", "B-T overlap @ Freq.");
result("J", "K", 7, "0.03", "dB");
result("J", "K", 8, "608.1", "Hz");
heading("J9", "Min. Input Z @ Freq.");
result("J", "K", 10, "681.6", "Ω");
cells.J11 = { v: "20000.0", k: "value", align: "right", fill: true };
cells.K11 = { v: <>Hz<Spin w={42} name="Input frequency" off="right" /></> };
cells.M2 = { v: "TONE CONTROL MODELLER vLO-Beta - © Cabirio@DiyAudio - December 2024", k: "value", align: "center", span: 12 };
cells.M3 = { v: <SheetLink href="#thread">For info and latest version, see this DiyAudio thread</SheetLink>, align: "center", span: 12 };
heading("O5", "Variable (-10 to +10)");
([["Q", "R", "Bass", "+5"], ["S", "T", "Mids", "0"], ["U", "V", "Treble", "+5"]] as const).forEach(([a, b, name, v]) => {
  cells[a + 5] = { v: name, align: "right" };
  cells[b + 5] = { v: <>{v}<Spin w={44} name={name} /></>, k: "value", fill: true };
});

const SheetGrid = () => (
  <Grid>
    <colgroup>
      <Col $w={40} />
      {widths.map((w, i) => <Col key={i} $w={w} />)}
    </colgroup>
    <thead>
      <Row $h={21}>
        <Head $corner />
        {widths.map((_, i) => <Head key={i} $on={i === 0} scope="col">{cols[i] ?? ""}</Head>)}
      </Row>
    </thead>
    <tbody>
      {Array.from({ length: NR }, (_, k) => k + 1).map((r) => {
        const out: ReactNode[] = [];
        for (let c = 0; c < NC; ) {
          const d = cells[(cols[c] ?? "-") + r] ?? {};
          const span = d.span ?? 1;
          out.push(
            <Cell key={c} colSpan={span} $e={[H[r - 1][c], V[r][c + span], H[r][c], V[r][c]]} $k={d.k} $align={d.align} $fill={d.fill} $wide={span > 1}>
              {d.v}
            </Cell>
          );
          c += span;
        }
        return <Row key={r} $h={rowHeight(r)}><Head scope="row">{r}</Head>{out}</Row>;
      })}
    </tbody>
  </Grid>
);

/* ---------- circuit drawing ---------- */

const resistors: [number, number][] = [[160, 238], [272, 238], [384, 238], [496, 238], [585, 346], [160, 543], [272, 543], [384, 543], [496, 543], [428, 650], [496, 780], [272, 910], [384, 910]];
const dots: [number, number][] = [[260, 238], [373, 238], [484, 238], [776, 238], [125, 543], [260, 543], [373, 543], [484, 543], [776, 543], [820, 543], [1000, 563], [618, 650], [373, 910]];
const black: [string, number, number][] = [
  ["Cb", 371, 77], ["33n", 371, 158], ["Rbs", 203, 207], ["Pot", 314, 207], ["20k", 427, 207], ["Rbs", 538, 207], ["6.2k", 202, 288], ["6.2k", 538, 288],
  ["Rb", 628, 317], ["130k", 628, 395], ["Cm", 370, 382], ["6.8n", 371, 460], ["Rms", 202, 512], ["Pot", 314, 512], ["20k", 427, 512], ["Rms", 538, 512],
  ["3k", 202, 590], ["3k", 538, 590], ["IN", 86, 552], ["U1", 947, 530], ["OUT", 1048, 573], ["Rm", 471, 620], ["22k", 471, 700], ["Cmt", 706, 620], ["5.6n", 707, 700],
  ["Ct", 438, 749], ["Rt", 538, 749], ["1.8n", 439, 830], ["15k", 538, 830], ["Pot", 314, 879], ["20k", 427, 879],
];
const blue: [string, number, number][] = [["← Boost", 154, 107], ["Cut →", 572, 107], ["Bass", 293, 324], ["Mids", 292, 626], ["Treble", 293, 789], ["= D. Self", 964, 877], ["= \"Classic\"", 980, 915]];

const Circuit = () => (
  <svg width="360" height="304" viewBox="34 42 1080 912" fontFamily="Noto Sans, sans-serif" fontWeight="700" fontSize="28" textAnchor="middle" role="img" aria-label="Tone control circuit">
    <path d="M35.500 43.500h1077v909h-1077z" fill="#fff" stroke="#0000ee" strokeWidth="3" />
    <g fill="none" stroke="#1a1ae6" strokeWidth="3">
      <path d="M160 238H125V910H270M102 543h58M248 238h24M248 543h24M360 238h24M360 543h24M470 238h26M470 543h26M584 238h416v325M584 543h192M776 238v672H472M360 910h24" />
      <path d="M260 238V109h104M378 109h106v129M260 543V412h104M378 412h106v131M373 238v108h212M673 346h147v304H714M373 543v107h55M516 650h184M373 910V780h60M445 780h52M584 780h34V650M820 543h66M978 563h44M886 586h-24v42" />
      <path d="M364 85v46M376 85v46M364 389v45M376 389v45M701 627v46M712 627v46M433 757v46M445 757v46" stroke="#333399" />
      <path d="M886 520v86l92-43zM895 543h10M893 586h12M899 580v12" stroke="#222299" strokeWidth="2.500" />
      <path d="M840 628h48l-24 24zM820 867h68" strokeWidth="2.500" />
      <path d="M595 692l15 14M641 692l-15 14M595 738l15-15M641 738l-15-15M604 714h28" strokeWidth="2.500" />
      <path d="M618 780h202V650M820 910h68" strokeDasharray="6 5" />
      <g stroke="#222299" strokeWidth="2.500">
        {resistors.map(([x, y]) => <path key={`${x}-${y}`} d={`M${x} ${y}l8-22 20 44 22-44 20 44 12-22h6`} />)}
      </g>
    </g>
    {dots.map(([x, y], i) => <path key={i} d={`M${x - 6} ${y - 6}h12v12h-12z`} fill="#0000ff" />)}
    <g fill="#000">{black.map(([t, x, y], i) => <text key={i} x={x} y={y}>{t}</text>)}</g>
    <g fill="#0000cc">{blue.map(([t, x, y], i) => <text key={i} x={x} y={y}>{t}</text>)}</g>
  </svg>
);

/* ---------- response chart ---------- */

const px = (f: number) => 745 + 276.8 * Math.log10(f / 20);
const py = (db: number) => 711.5 - 25.37 * db;

/* cubic through the points, each tangent weighted by the distance to its neighbours */
const smooth = (s: string) => {
  const p = s.split(" ").map((q) => q.split(",").map(Number));
  const slope = (i: number) => (p[i + 1][1] - p[i][1]) / (p[i + 1][0] - p[i][0]);
  const tangent = (i: number) => {
    if (i === 0) return slope(0);
    if (i === p.length - 1) return slope(i - 1);
    const h1 = p[i][0] - p[i - 1][0];
    const h2 = p[i + 1][0] - p[i][0];
    return (slope(i - 1) * h2 + slope(i) * h1) / (h1 + h2);
  };
  let d = `M${p[0]}`;
  for (let i = 0; i < p.length - 1; i++) {
    const [b, c] = [p[i], p[i + 1]];
    const h = (c[0] - b[0]) / 3;
    d += `C${b[0] + h} ${b[1] + tangent(i) * h} ${c[0] - h} ${c[1] - tangent(i + 1) * h} ${c[0]} ${c[1]}`;
  }
  return d;
};
const series = [
  { name: "All max.", color: "#00bfff", d: "745,395 787,395.4 829,396.6 877,398.8 912,401.3 961,406.3 1022,413.7 1060,416.6 1085,417.2 1110,416.5 1155,413 1185,410.7 1215,410 1240,410.9 1271,414 1298,418.3 1340,425.2 1382,430.5 1427,432.3 1465,431.3 1514,429 1575,427.5" },
  { name: "Variable", color: "#ffc000", d: "745,574 787,576.6 829,581.7 877,592.5 912,604.8 961,630.5 1022,669 1054,686.7 1080,697.8 1105,705.5 1130,710 1155,711.5 1180,709.8 1215,702.6 1255,686.5 1298,663.2 1344,638 1382,620 1430,603.8 1465,596.8 1514,591 1575,588" },
  { name: "Mids max.", color: "#ff0000", d: "745,708.2 787,704.5 829,697.3 877,680.8 912,661.5 961,621 987,592 1022,546 1059,495 1080,467 1105,438 1131,415.2 1145,408 1160,405.6 1175,408.3 1190,415.5 1215,437 1237,463 1271,508 1298,542 1332,583.5 1382,632.3 1430,666.5 1465,683.5 1514,698 1575,706.5" },
  { name: "Bass+Treble max.", color: "#00ff00", d: "745,405 787,414.8 829,432 877,465 912,498 961,555 987,587.5 1022,628.5 1056,664.8 1083,686.8 1105,699.8 1130,708.8 1155,711.3 1180,708.3 1215,695 1237,681 1271,651.5 1298,623 1332,583.5 1382,525 1430,475.8 1465,449 1492,434 1514,424.7 1548,414.5 1575,409.5" },
];
const minorF: number[] = [];
[20, 200, 2000].forEach((b) => { for (let k = 2; k <= 9; k++) minorF.push(b * k); });

const Chart = () => (
  <svg width="909" height="465" viewBox="706 314 909 465" fontFamily={CELL} role="img" aria-label="Frequency response">
    <path d="M706.500 314.500h908v464h-908z" fill="#fff" stroke="#3c3c3c" />
    <path d="M745 331.500h830.500v380H745z" fill="#0d0d0d" stroke="#8c8c8c" />
    <g stroke="#808080" strokeDasharray="5 2">
      {minorF.map((f) => <path key={f} d={`M${px(f)} 331V711`} />)}
      {[1, 2, 4, 5, 7, 8, 10, 11, 13, 14].map((v) => <path key={v} d={`M745 ${py(v)}H1575`} />)}
    </g>
    <g stroke="#8c8c8c" strokeWidth="1.300">
      {[3, 6, 9, 12].map((v) => <path key={v} d={`M745 ${py(v)}H1575`} />)}
      <path d={`M${px(200)} 331V711M${px(2000)} 331V711`} />
    </g>
    <g fill="none" strokeWidth="2.400">
      {series.map((s) => <path key={s.name} d={smooth(s.d)} stroke={s.color} />)}
    </g>
    <g fill="#595959" fontSize="14" textAnchor="end">
      {[0, 3, 6, 9, 12, 15].map((v) => <text key={v} x="740" y={py(v) + 5}>{v}</text>)}
    </g>
    <g fill="#a0a0a0" fontSize="14" textAnchor="middle">
      {[20, 200, 2000, 20000].map((f) => <text key={f} x={px(f)} y="729">{f}</text>)}
    </g>
    <g fontSize="18" fill="#595959">
      {([[888, 3], [1077, 2], [1211, 0], [1326, 1]] as const).map(([x, i]) => (
        <g key={i}>
          <path d={`M${x} 764.500h38`} stroke={series[i].color} strokeWidth="2.400" />
          <text x={x + 41} y="769">{series[i].name}</text>
        </g>
      ))}
    </g>
  </svg>
);

/* ---------- page ---------- */

const menus: [string, string, string][] = [["", "F", "ile"], ["", "E", "dit"], ["", "V", "iew"], ["", "I", "nsert"], ["F", "o", "rmat"], ["St", "y", "les"], ["", "S", "heet"], ["", "D", "ata"], ["", "T", "ools"], ["", "W", "indow"], ["", "H", "elp"]];
const Chevron = ({ d }: { d: string }) => <svg width="12" height="12" viewBox="0 0 12 12" aria-hidden="true"><path d={d} fill="none" stroke="#505050" strokeWidth="2" /></svg>;

export default function App() {
  return (
    <Frame>
      <Global />
      <Top>
        <TitleBar>
          <svg width="21" height="21" viewBox="0 0 21 21" aria-hidden="true">
            <path d="M2 2.500A1.500 1.500 0 013.500 1H13l5 5v13.500H3.500A1.500 1.500 0 012 18z" fill="#2fb457" /><path d="M12 1h1l5 5v1h-6z" fill="#a8e6a0" />
            <path d="M5 9.500h9v6H5zM5 11.500h9M5 13.500h9M8 9.500v6M11 9.500v6" stroke="#fff" fill="none" />
          </svg>
          <Title>Tone Control Modeller vLO-Beta.ods — LibreOffice Calc</Title>
          <WindowButton type="button" aria-label="Minimize"><svg width="12" height="12" viewBox="0 0 12 12"><path d="M0 6.500h12" stroke="#000" /></svg></WindowButton>
          <WindowButton type="button" aria-label="Maximize"><svg width="12" height="12" viewBox="0 0 12 12"><path d="M.5.5h11v11H.5z" stroke="#000" fill="none" /></svg></WindowButton>
          <WindowButton type="button" aria-label="Close"><svg width="12" height="12" viewBox="0 0 12 12"><path d="M0 0l12 12M12 0L0 12" stroke="#000" /></svg></WindowButton>
        </TitleBar>
        <MenuBar>
          {menus.map(([a, b, c]) => <MenuItem type="button" key={a + b + c}>{a}<u>{b}</u>{c}</MenuItem>)}
          <CloseDoc type="button" aria-label="Close document"><svg width="11" height="11" viewBox="0 0 11 11"><path d="M2 2l7 7M9 2L2 9" stroke="#333" strokeWidth="1.500" /></svg></CloseDoc>
        </MenuBar>
        <ToolRow $h={34}><Tools items={bar1} /></ToolRow>
        <ToolRow $h={41} $pad={3}>
          <Combo $w={230} $gap={8}><select aria-label="Font name" defaultValue="Calibri"><option>Calibri</option></select><ComboArrow /></Combo>
          <Combo $w={75}><select aria-label="Font size" defaultValue="11 pt"><option>11 pt</option></select><ComboArrow /></Combo>
          <Tools items={bar2} />
        </ToolRow>
      </Top>
      <Body>
        <Main>
          <FormulaBar>
            <Combo $w={180}><select aria-label="Name box" defaultValue="A29"><option>A29</option></select><ComboArrow /></Combo>
            <Sep />
            <FormulaTool type="button" $w={28} aria-label="Function wizard">{fxText(18)}</FormulaTool>
            <FormulaTool type="button" $w={18} aria-label="Sum"><svg width="14" height="18" viewBox="0 0 14 18"><path d="M13 3V1H1l7 8-7 8h12v-2" fill="none" stroke={INK} strokeWidth="1.300" /></svg></FormulaTool>
            <DropArrow type="button" aria-label="Sum options"><Caret /></DropArrow>
            <FormulaTool type="button" $w={28} aria-label="Formula"><svg width="12" height="10" viewBox="0 0 12 10"><path d="M0 1.500h12M0 7.500h12" stroke={INK} strokeWidth="2" /></svg></FormulaTool>
            <FormulaInput aria-label="Input line" />
            <FormulaTool type="button" $w={20} aria-label="Expand formula bar"><svg width="16" height="9" viewBox="0 0 16 9"><path d="M0 0h16L8 9z" /></svg></FormulaTool>
          </FormulaBar>
          <SheetArea>
            <SheetView>
              <PageBreak $x={824} />
              <PageBreak $x={1614} />
              <SheetGrid />
              <Floating $x={310} $y={290}><Circuit /></Floating>
              <Floating $x={705} $y={135}><Chart /></Floating>
            </SheetView>
            <VBar>
              <VSplit />
              <ScrollButton type="button" aria-label="Scroll up"><Chevron d="M1 9l5-5 5 5" /></ScrollButton>
              <VThumb />
              <ScrollButton type="button" aria-label="Scroll down"><Chevron d="M1 3l5 5 5-5" /></ScrollButton>
            </VBar>
          </SheetArea>
          <HBar>
            <ScrollButton type="button" aria-label="Scroll left"><Chevron d="M9 1L4 6l5 5" /></ScrollButton>
            <HThumb />
            <ScrollButton type="button" aria-label="Scroll right"><Chevron d="M3 1l5 5-5 5" /></ScrollButton>
            <HSplit />
          </HBar>
          <Tabs>
            <TabNav type="button" aria-label="First sheet"><svg width="10" height="15" viewBox="0 0 10 15"><path d="M.5 0v15" stroke="#999" /><path d="M10 0v15L2 7.500z" fill="#999" /></svg></TabNav>
            <TabNav type="button" aria-label="Previous sheet"><svg width="8" height="15" viewBox="0 0 8 15"><path d="M8 0v15L0 7.500z" fill="#999" /></svg></TabNav>
            <TabNav type="button" aria-label="Next sheet"><svg width="8" height="15" viewBox="0 0 8 15"><path d="M0 0v15l8-7.500z" fill="#999" /></svg></TabNav>
            <TabNav type="button" aria-label="Last sheet"><svg width="10" height="15" viewBox="0 0 10 15"><path d="M9.500 0v15" stroke="#999" /><path d="M0 0v15l8-7.500z" fill="#999" /></svg></TabNav>
            <TabNav type="button" $w={40} aria-label="Add sheet"><svg width="17" height="17" viewBox="0 0 17 17"><path d="M8.500 0v17M0 8.500h17" stroke="#000" strokeWidth="3" /></svg></TabNav>
            <SheetTab type="button">Main</SheetTab>
          </Tabs>
        </Main>
        <Sidebar>
          <SideTool type="button" $h={26} aria-label="Sidebar settings"><svg width="11" height="9" viewBox="0 0 11 9"><path d="M0 .5h11M0 4.500h11M0 8.500h11" stroke={INK} /></svg></SideTool>
          {["props", "styles", "gallery", "compass"].map((n) => <SideTool type="button" key={n} aria-label={n}>{icons[n]}</SideTool>)}
          <SideTool type="button" aria-label="functions">{fxText(24)}</SideTool>
          <SideHandle type="button" aria-label="Hide sidebar"><svg width="5" height="8" viewBox="0 0 5 8"><path d="M0 0v8l5-4z" fill="#fff" /></svg></SideHandle>
        </Sidebar>
      </Body>
      <Status>
        <StatusCell><svg width="16" height="16" viewBox="0 0 16 16" fill="none" stroke="#8a8a8a"><path d="M.5.5h13l2 2v13H.5zM3.500.5v5h9v-5M3.500 15.500v-6h9v6M6 12v3" /></svg></StatusCell>
        <StatusCell $align="flex-start">Sheet 1 of 1</StatusCell>
        <StatusCell />
        <StatusCell $align="flex-start">PageStyle_Main</StatusCell>
        <StatusCell>[None]</StatusCell>
        <StatusCell />
        <StatusCell>
          <svg width="29" height="17" viewBox="0 0 29 17" fill="none"><path d="M.5 4.500h16v9H.5z" stroke={BLUE} /><path d="M21 .5h7M21 16.500h7M24.500.5v16" stroke={INK} strokeWidth="1.200" /></svg>
        </StatusCell>
        <StatusCell />
        <StatusCell>Average: ; Sum: 0</StatusCell>
        <StatusCell>
          <button type="button" aria-label="Zoom out"><svg width="10" height="10" viewBox="0 0 10 10"><path d="M0 5h10" stroke="#222" strokeWidth="2" /></svg></button>
          <ZoomRange type="range" min="0" max="100" defaultValue="48" aria-label="Zoom" />
          <button type="button" aria-label="Zoom in"><svg width="10" height="10" viewBox="0 0 10 10"><path d="M0 5h10M5 0v10" stroke="#222" strokeWidth="2" /></svg></button>
        </StatusCell>
        <StatusCell>100%</StatusCell>
      </Status>
    </Frame>
  );
}
